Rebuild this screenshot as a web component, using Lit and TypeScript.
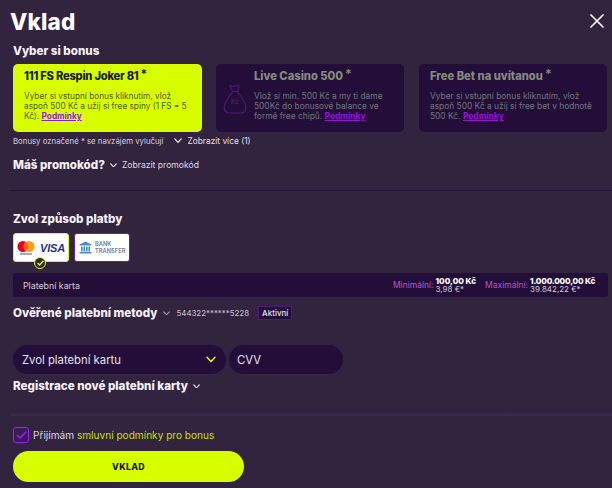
import { LitElement, html, css, svg } from "lit";
import { customElement } from "lit/decorators.js";

const chev = (color = "#fff", w = 9) => html`<svg class="chev" width=${w} height=${w * 0.7} viewBox="0 0 10 7" fill="none" stroke=${color} stroke-width="1.5" stroke-linecap="round" stroke-linejoin="round"><path d="M1 1.2 5 5.4 9 1.2"/></svg>`;

const bag = svg`<path d="M7 2.500c2 1 3 1.200 4.500 .6 1.600-.7 3.200-.8 4.500-.3L14.500 8.500H9.500Z"/><path d="M9.500 8.500h5"/><path d="M9.500 9C6 14 1.500 19 1.200 24c-.3 4 2 6 5 6h11.600c3 0 5.300-2 5-6C22.500 19 18 14 14.500 9"/>`;

@customElement("app-root")
export class AppRoot extends LitElement {
  static styles = css`
    :host { display: block; width: 612px; height: 488px; overflow: hidden; background: #32233f; color: #fff; font-family: Inter, "Liberation Sans", sans-serif; }
    .page { display: flex; flex-direction: column; padding: 0 4px 0 13px; height: 488px; box-sizing: border-box; }
    .head { height: 42px; display: flex; align-items: center; justify-content: space-between; margin-left: -3px; padding-right: 4px; flex: none; }
    h1 { margin: 0; font-size: 22.500px; font-weight: 800; letter-spacing: 0.2px; }
    .x { display: block; }
    .sec { font-size: 11.600px; font-weight: 800; color: #f4f1f6; white-space: nowrap; }
    .row22 { height: 22px; display: flex; align-items: center; flex: none; }
    .up { padding-bottom: 4px; box-sizing: border-box; }
    .cards { display: grid; grid-template-columns: repeat(3, 188px); column-gap: 15px; height: 67px; flex: none; }
    .card { background: #220e38; border-radius: 5px; padding: 3px 8px 0 11px; display: flex; gap: 7px; box-sizing: border-box; color: #75757a; }
    .card.on { background: #d8ff00; color: #4e5c0a; height: 68px; width: 189px; }
    .card.bag { padding-left: 7px; }
    .bagi { flex: none; width: 24px; height: 31px; margin-top: 16px; position: relative; }
    .bagi svg { display: block; }
    .bagi span { position: absolute; left: 0; right: 0; top: 15px; text-align: center; font-size: 6.500px; font-weight: 700; color: #4a1a78; }
    .ct { display: flex; align-items: flex-start; font-size: 11.200px; font-weight: 800; color: #858b80; white-space: nowrap; height: 21px; line-height: 19px; }
    .on .ct { color: #1b1a10; letter-spacing: -0.25px; }
    .ct sup { font-size: 12px; line-height: 12px; margin-left: 2px; margin-top: 1px; font-weight: 700; }
    .cb { font-size: 8.400px; line-height: 10px; margin: 3px 0 0; white-space: nowrap; }
    .on .cb { font-size: 8.250px; }
    .cb a { color: #9a10d8; font-weight: 700; text-decoration: underline; }
    .on .cb a { color: #9216e6; }
    .note { height: 17px; display: flex; align-items: center; font-size: 7.800px; color: #d8d2de; flex: none; margin-top: 1px; }
    .more { display: flex; align-items: center; gap: 5px; margin-left: 11px; font-size: 8.400px; color: #e4e0e8; }
    .promo { height: 22px; margin-top: 5px; display: flex; align-items: center; gap: 5px; flex: none; }
    .small { font-size: 8.600px; color: #dfdbe4; }
    .hr { height: 1px; background: #2a1638; margin: 14px -4px 0 -3px; flex: none; }
    .ways { margin-top: 17px; }
    .tiles { display: flex; gap: 5px; height: 29px; margin-top: 3px; flex: none; }
    .tile { width: 56px; height: 29px; box-sizing: border-box; background: #fff; border: 1.500px solid #6d1f9c; border-radius: 3px; display: flex; align-items: center; position: relative; }
    .tile.on { border-color: #d8ff00; }
    .mc { margin-left: 3px; display: block; }
    .visa { font-family: "Liberation Sans", sans-serif; font-size: 11px; font-weight: 700; font-style: italic; color: #23367f; margin-left: 5px; letter-spacing: -0.2px; }
    .bank { font-size: 5.600px; line-height: 7px; letter-spacing: 0.1px; color: #6f7896; font-weight: 600; margin-left: 3px; }
    .bk { margin-left: 4px; display: block; }
    .tick { position: absolute; left: 20px; bottom: -8px; width: 12px; height: 12px; box-sizing: border-box; border-radius: 50%; background: #32233f; border: 1.500px solid #d8ff00; display: flex; align-items: center; justify-content: center; }
    .bar { background: #220e38; border-radius: 3px; height: 24px; margin-top: 11px; display: flex; align-items: center; padding: 0 13px 0 10px; flex: none; font-size: 8.800px; color: #d4cedb; }
    .lim { display: flex; align-items: center; gap: 2px; }
    .lim.first { margin-left: auto; }
    .lim.second { margin-left: 9px; }
    .lim.second b { letter-spacing: -0.2px; }
    .lab { color: #b358cf; font-size: 8.500px; }
    .vals { display: flex; flex-direction: column; line-height: 8.500px; font-size: 8px; color: #cfc9d6; }
    .vals b { font-weight: 800; color: #fff; font-size: 8.100px; }
    .ver { height: 22px; margin-top: 5px; display: flex; align-items: center; flex: none; }
    .verchev { margin-left: 5px; display: flex; }
    .num { font-size: 7.900px; color: #c9c3d0; margin-left: 7px; }
    .tag { margin-left: 9px; font-size: 8px; font-weight: 500; border: 1.500px solid #4d1a7c; background: #220e38; color: #e6e2ea; padding: 1.500px 3px; line-height: 9px; }
    .inputs { display: flex; gap: 3px; margin-top: 21px; height: 29px; flex: none; }
    .inp { background: #220e38; border-radius: 15px; display: flex; align-items: center; justify-content: space-between; box-sizing: border-box; padding: 0 10px 0 9px; font-size: 11.300px; color: #e6e2ea; }
    .sel { width: 213px; }
    .cvv { width: 114px; padding-left: 8px; }
    .reg { height: 22px; margin-top: 1px; display: flex; align-items: center; gap: 5px; flex: none; }
    .band { height: 6px; background: linear-gradient(#2f2140, #3a2b47); margin: 13px -4px 0 -3px; flex: none; }
    .acc { display: flex; align-items: center; gap: 4px; margin-top: 11px; height: 16px; font-size: 10.100px; color: #dcd7e2; flex: none; }
    .acc em { font-style: normal; color: #c3e000; }
    .box { width: 16px; height: 16px; box-sizing: border-box; border: 1.500px solid #a020f0; border-radius: 3px; display: flex; align-items: center; justify-content: center; background: #3a1b5a; }
    .btn { margin-top: 8px; width: 231px; height: 31px; border-radius: 16px; background: #d8ff00; color: #17170f; font-size: 8.800px; font-weight: 800; letter-spacing: 0.3px; display: flex; align-items: center; justify-content: center; flex: none; }
  `;

  render() {
    return html`<div class="page">
      <div class="head">
        <h1>Vklad</h1>
        <svg class="x" width="14" height="14" viewBox="0 0 14 14" stroke="#fff" stroke-width="1.700" stroke-linecap="round"><path d="M1 1l12 12M13 1 1 13"/></svg>
      </div>
      <div class="row22 up sec">Vyber si bonus</div>
      <div class="cards">
        <div class="card on"><div>
          <div class="ct">111 FS Respin Joker 81<sup>*</sup></div>
          <p class="cb">Vyber si vstupní bonus kliknutím, vlož<br>aspoň 500 Kč a užij si free spiny (1 FS = 5<br>Kč). <a>Podmínky</a></p>
        </div></div>
        <div class="card bag">
          <div class="bagi"><svg width="24" height="31" viewBox="0 0 24 31" fill="none" stroke="#4a1a78" stroke-width="1.200" stroke-linejoin="round">${bag}</svg><span>Kč</span></div>
          <div>
            <div class="ct">Live Casino 500<sup>*</sup></div>
            <p class="cb">Vlož si min. 500 Kč a my ti dáme<br>500Kč do bonusové balance ve<br>formě free chipů. <a>Podmínky</a></p>
          </div>
        </div>
        <div class="card"><div>
          <div class="ct">Free Bet na uvítanou<sup>*</sup></div>
          <p class="cb">Vyber si vstupní bonus kliknutím, vlož<br>aspoň 500 Kč a užij si free bet v hodnotě<br>500 Kč. <a>Podmínky</a></p>
        </div></div>
      </div>
      <div class="note">Bonusy označené * se navzájem vylučují<span class="more">${chev("#fff", 8)}Zobrazit více (1)</span></div>
      <div class="promo"><span class="sec">Máš promokód?</span>${chev("#fff", 7)}<span class="small">Zobrazit promokód</span></div>
      <div class="hr"></div>
      <div class="row22 sec ways">Zvol způsob platby</div>
      <div class="tiles">
        <div class="tile on">
          <svg class="mc" width="18" height="15" viewBox="0 0 18 15"><circle cx="6" cy="6.500" r="5.500" fill="#e5001c"/><circle cx="12" cy="6.500" r="5.500" fill="#f79e1b"/><path d="M9 2a5.500 5.500 0 0 1 0 9 5.500 5.500 0 0 1 0-9Z" fill="#f4641a"/><rect x="3" y="13.500" width="12" height="1" fill="#555"/></svg>
          <span class="visa">VISA</span>
          <span class="tick"><svg width="7" height="6" viewBox="0 0 7 6" fill="none" stroke="#d8ff00" stroke-width="1.400"><path d="M.6 3 2.600 5 6.400 .8"/></svg></span>
        </div>
        <div class="tile">
          <svg class="bk" width="13" height="13" viewBox="0 0 13 13" fill="#4d8ac4"><path d="M6.500 .5 12.500 3.500V4.500H.5V3.500Z"/><rect x="2" y="5.500" width="1.600" height="5"/><rect x="4.400" y="5.500" width="1.600" height="5"/><rect x="7" y="5.500" width="1.600" height="5"/><rect x="9.400" y="5.500" width="1.600" height="5"/><rect x=".5" y="11" width="12" height="1.500"/></svg>
          <span class="bank">BANK<br>TRANSFER</span>
        </div>
      </div>
      <div class="bar">
        <span>Platební karta</span>
        <div class="lim first"><span class="lab">Minimální:</span><div class="vals"><b>100,00 Kč</b><span>3,98 €*</span></div></div>
        <div class="lim second"><span class="lab">Maximální:</span><div class="vals"><b>1.000.000,00 Kč</b><span>39.842,22 €*</span></div></div>
      </div>
      <div class="ver"><span class="sec">Ověřené platební metody</span><span class="verchev">${chev("#a8a2b0", 7)}</span><span class="num">544322******5228</span><span class="tag">Aktivní</span></div>
      <div class="inputs">
        <div class="inp sel"><span>Zvol platební kartu</span>${chev("#d8ff00", 10)}</div>
        <div class="inp cvv">CVV</div>
      </div>
      <div class="reg"><span class="sec">Registrace nové platební karty</span>${chev("#fff", 7)}</div>
      <div class="band"></div>
      <div class="acc"><span class="box"><svg width="11" height="8" viewBox="0 0 11 8" fill="none" stroke="#a020f0" stroke-width="1.500"><path d="M1 4l3 3 6-6"/></svg></span><span>Přijímám <em>smluvní podmínky pro bonus</em></span></div>
      <div class="btn">VKLAD</div>
    </div>`;
  }
}
